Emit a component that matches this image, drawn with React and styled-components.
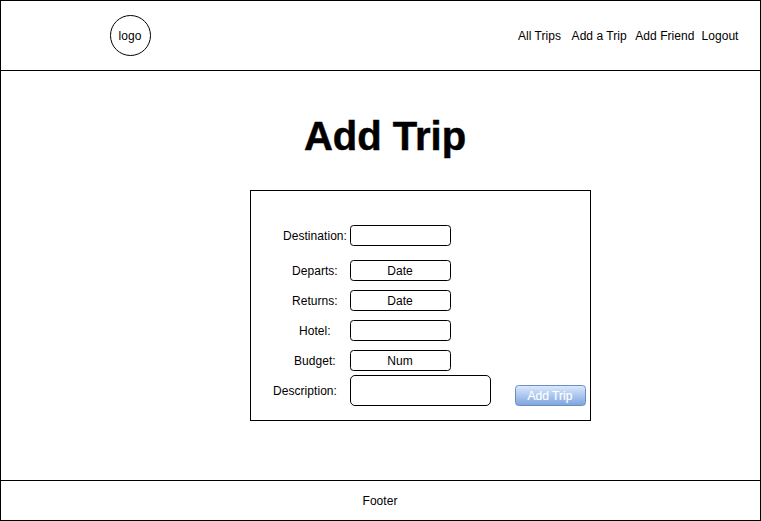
import React from "react";
import styled, { createGlobalStyle } from "styled-components";

const GlobalStyle = createGlobalStyle`
  * { box-sizing: border-box; }
  body { margin: 0; background: #fff; }
`;

const Page = styled.div`
  display: grid;
  grid-template-rows: 70px 1fr 40px;
  width: 761px;
  height: 521px;
  border: 1px solid #000;
  background: #fff;
  color: #000;
  font: 12px/14px "Liberation Sans", Arial, sans-serif;
  letter-spacing: 0.05px;
  overflow: hidden;
`;

const Header = styled.header`
  display: flex;
  align-items: center;
  justify-content: space-between;
  padding: 0 21.5px 0 109px;
  border-bottom: 1px solid #000;
`;

const Logo = styled.div`
  display: grid;
  place-items: center;
  width: 41px;
  height: 41px;
  padding-right: 1px;
  border: 1px solid #000;
  border-radius: 50%;
`;

const Nav = styled.nav`
  display: flex;
`;

const NavLink = styled.a`
  margin-left: ${(p) => p.$gap || 0}px;
  white-space: nowrap;
`;

const Main = styled.main`
  display: flex;
  flex-direction: column;
`;

const Title = styled.h1`
  margin: 42px 0 0 9px;
  height: 77px;
  text-align: center;
  font-size: 40px;
  line-height: 46px;
  font-weight: 700;
  letter-spacing: 0;
  -webkit-text-stroke: 0.5px currentColor;
`;

const Form = styled.form`
  width: 341px;
  height: 231px;
  margin-left: 249px;
  padding: 34px 4px 0 0;
  border: 1px solid #000;
`;

const Row = styled.div`
  display: grid;
  grid-template-columns: 99px auto 1fr;
  align-items: start;
  height: ${(p) => p.$height || 30}px;
`;

const Label = styled.label`
  padding: ${(p) => p.$top || 4}px 0 0 ${(p) => p.$left}px;
  white-space: nowrap;
`;

const Field = styled.div`
  display: grid;
  place-items: center;
  width: ${(p) => (p.$large ? 141 : 101)}px;
  height: ${(p) => (p.$large ? 31 : 21)}px;
  padding-right: 1px;
  border: 1px solid #000;
  border-radius: ${(p) => (p.$large ? 5 : 3.5)}px;
`;

const Button = styled.button`
  justify-self: end;
  margin-top: 10px;
  width: 71px;
  height: 21px;
  padding: 0 1px 0 0;
  border: 1px solid #6c8ebf;
  border-radius: 3.5px;
  background: linear-gradient(#dae8fc, #7ea6e0);
  color: #fff;
  font: inherit;
  letter-spacing: inherit;
  -webkit-text-stroke: 0.2px currentColor;
`;

const Footer = styled.footer`
  display: grid;
  place-items: center;
  padding-right: 1px;
  border-top: 1px solid #000;
`;

export default function App() {
  return (
    <>
      <GlobalStyle />
      <Page>
        <Header>
          <Logo>logo</Logo>
          <Nav>
            <NavLink>All Trips</NavLink>
            <NavLink $gap={10.5}>Add a Trip</NavLink>
            <NavLink $gap={8.5}>Add Friend</NavLink>
            <NavLink $gap={7}>Logout</NavLink>
          </Nav>
        </Header>
        <Main>
          <Title>Add Trip</Title>
          <Form>
            <Row $height={35}>
              <Label $left={32}>Destination:</Label>
              <Field />
            </Row>
            <Row>
              <Label $left={41}>Departs:</Label>
              <Field>Date</Field>
            </Row>
            <Row>
              <Label $left={41}>Returns:</Label>
              <Field>Date</Field>
            </Row>
            <Row>
              <Label $left={48}>Hotel:</Label>
              <Field />
            </Row>
            <Row $height={25}>
              <Label $left={43}>Budget:</Label>
              <Field>Num</Field>
            </Row>
            <Row $height={31}>
              <Label $left={22} $top={9}>Description:</Label>
              <Field $large />
              <Button type="button">Add Trip</Button>
            </Row>
          </Form>
        </Main>
        <Footer>Footer</Footer>
      </Page>
    </>
  );
}
